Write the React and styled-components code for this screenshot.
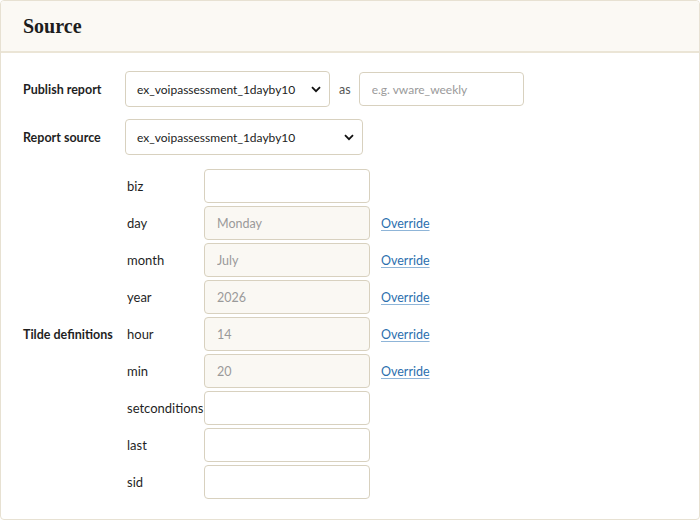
import React from 'react';
import styled, { createGlobalStyle } from 'styled-components';

const GlobalStyle = createGlobalStyle`
  html, body {
    margin: 0;
    padding: 0;
    background: #fff;
  }
  body {
    font-family: Lato, "Noto Sans", sans-serif;
    color: #222;
  }
`;

const Panel = styled.div`
  box-sizing: border-box;
  width: 700px;
  height: 520px;
  border: 1px solid #e7e1d2;
  border-radius: 4px;
  overflow: hidden;
  background: #fff;
`;

const Header = styled.div`
  height: 50px;
  display: flex;
  align-items: center;
  padding: 0 22px;
  background: #fbf9f4;
  border-bottom: 2px solid #ebe5d6;
`;

const Title = styled.h2`
  margin: 0;
  font-family: "Liberation Serif", serif;
  font-size: 20px;
  font-weight: 700;
  color: #1d1d1d;
`;

const Body = styled.div`
  padding: 18px 22px 0;
  display: flex;
  flex-direction: column;
`;

const FormRow = styled.div`
  display: flex;
  align-items: ${p => (p.top ? 'flex-start' : 'center')};
  margin-bottom: ${p => p.gap || 0}px;
`;

const RowLabel = styled.label`
  width: 102px;
  flex-shrink: 0;
  font-size: 12.5px;
  font-weight: 700;
  color: #1f1f1f;
  align-self: center;
`;

const SelectWrap = styled.div`
  position: relative;
  width: ${p => p.width}px;
  height: 36px;
`;

const Select = styled.select`
  appearance: none;
  box-sizing: border-box;
  width: 100%;
  height: 100%;
  padding: 0 30px 0 11px;
  border: 1px solid #d8d1bf;
  border-radius: 4px;
  background: #fff;
  font-family: Lato, "Noto Sans", sans-serif;
  font-size: 12px;
  color: #222;
  outline: none;
`;

const Chevron = styled.svg`
  position: absolute;
  right: 9px;
  top: 15px;
  pointer-events: none;
`;

const AsText = styled.span`
  margin: 0 8px 0 9px;
  font-size: 12.5px;
  color: #555;
`;

const TextInput = styled.input`
  box-sizing: border-box;
  width: ${p => p.width}px;
  height: 34px;
  padding: 0 12px;
  border: 1px solid #d8d1bf;
  border-radius: 4px;
  background: ${p => (p.disabled ? '#faf8f3' : '#fff')};
  font-family: Lato, "Noto Sans", sans-serif;
  font-size: 12.5px;
  color: #9a9a9a;
  outline: none;
  &::placeholder {
    color: #9a9a9a;
    font-size: 12px;
  }
`;

const TildeList = styled.div`
  display: flex;
  flex-direction: column;
  gap: 3px;
  margin-left: 2px;
`;

const TildeRow = styled.div`
  display: flex;
  align-items: center;
`;

const TildeName = styled.span`
  width: 77px;
  flex-shrink: 0;
  font-size: 13px;
  color: #1f1f1f;
  white-space: nowrap;
`;

const OverrideLink = styled.a`
  margin-left: 11px;
  font-size: 12.5px;
  color: #2b6fae;
  text-decoration: underline;
  text-underline-offset: 2px;
  text-decoration-color: #8fb5d8;
  cursor: pointer;
`;

const SelectBox = ({ width, value }) => (
  <SelectWrap width={width}>
    <Select defaultValue={value}>
      <option>{value}</option>
    </Select>
    <Chevron width="10" height="7" viewBox="0 0 10 7">
      <path d="M1 1.2 L5 5.2 L9 1.2" fill="none" stroke="#111" strokeWidth="1.8" />
    </Chevron>
  </SelectWrap>
);

const tildes = [
  { name: 'biz' },
  { name: 'day', value: 'Monday' },
  { name: 'month', value: 'July' },
  { name: 'year', value: '2026' },
  { name: 'hour', value: '14' },
  { name: 'min', value: '20' },
  { name: 'setconditions' },
  { name: 'last' },
  { name: 'sid' },
];

export default function App() {
  return (
    <>
      <GlobalStyle />
      <Panel>
        <Header>
          <Title>Source</Title>
        </Header>
        <Body>
          <FormRow gap={12}>
            <RowLabel>Publish report</RowLabel>
            <SelectBox width={205} value="ex_voipassessment_1dayby10" />
            <AsText>as</AsText>
            <TextInput width={165} placeholder="e.g. vware_weekly" />
          </FormRow>
          <FormRow gap={14}>
            <RowLabel>Report source</RowLabel>
            <SelectBox width={238} value="ex_voipassessment_1dayby10" />
          </FormRow>
          <FormRow top>
            <RowLabel>Tilde definitions</RowLabel>
            <TildeList>
              {tildes.map(t => (
                <TildeRow key={t.name}>
                  <TildeName>{t.name}</TildeName>
                  <TextInput
                    width={166}
                    disabled={!!t.value}
                    value={t.value || ''}
                    readOnly
                  />
                  {t.value && <OverrideLink>Override</OverrideLink>}
                </TildeRow>
              ))}
            </TildeList>
          </FormRow>
        </Body>
      </Panel>
    </>
  );
}
